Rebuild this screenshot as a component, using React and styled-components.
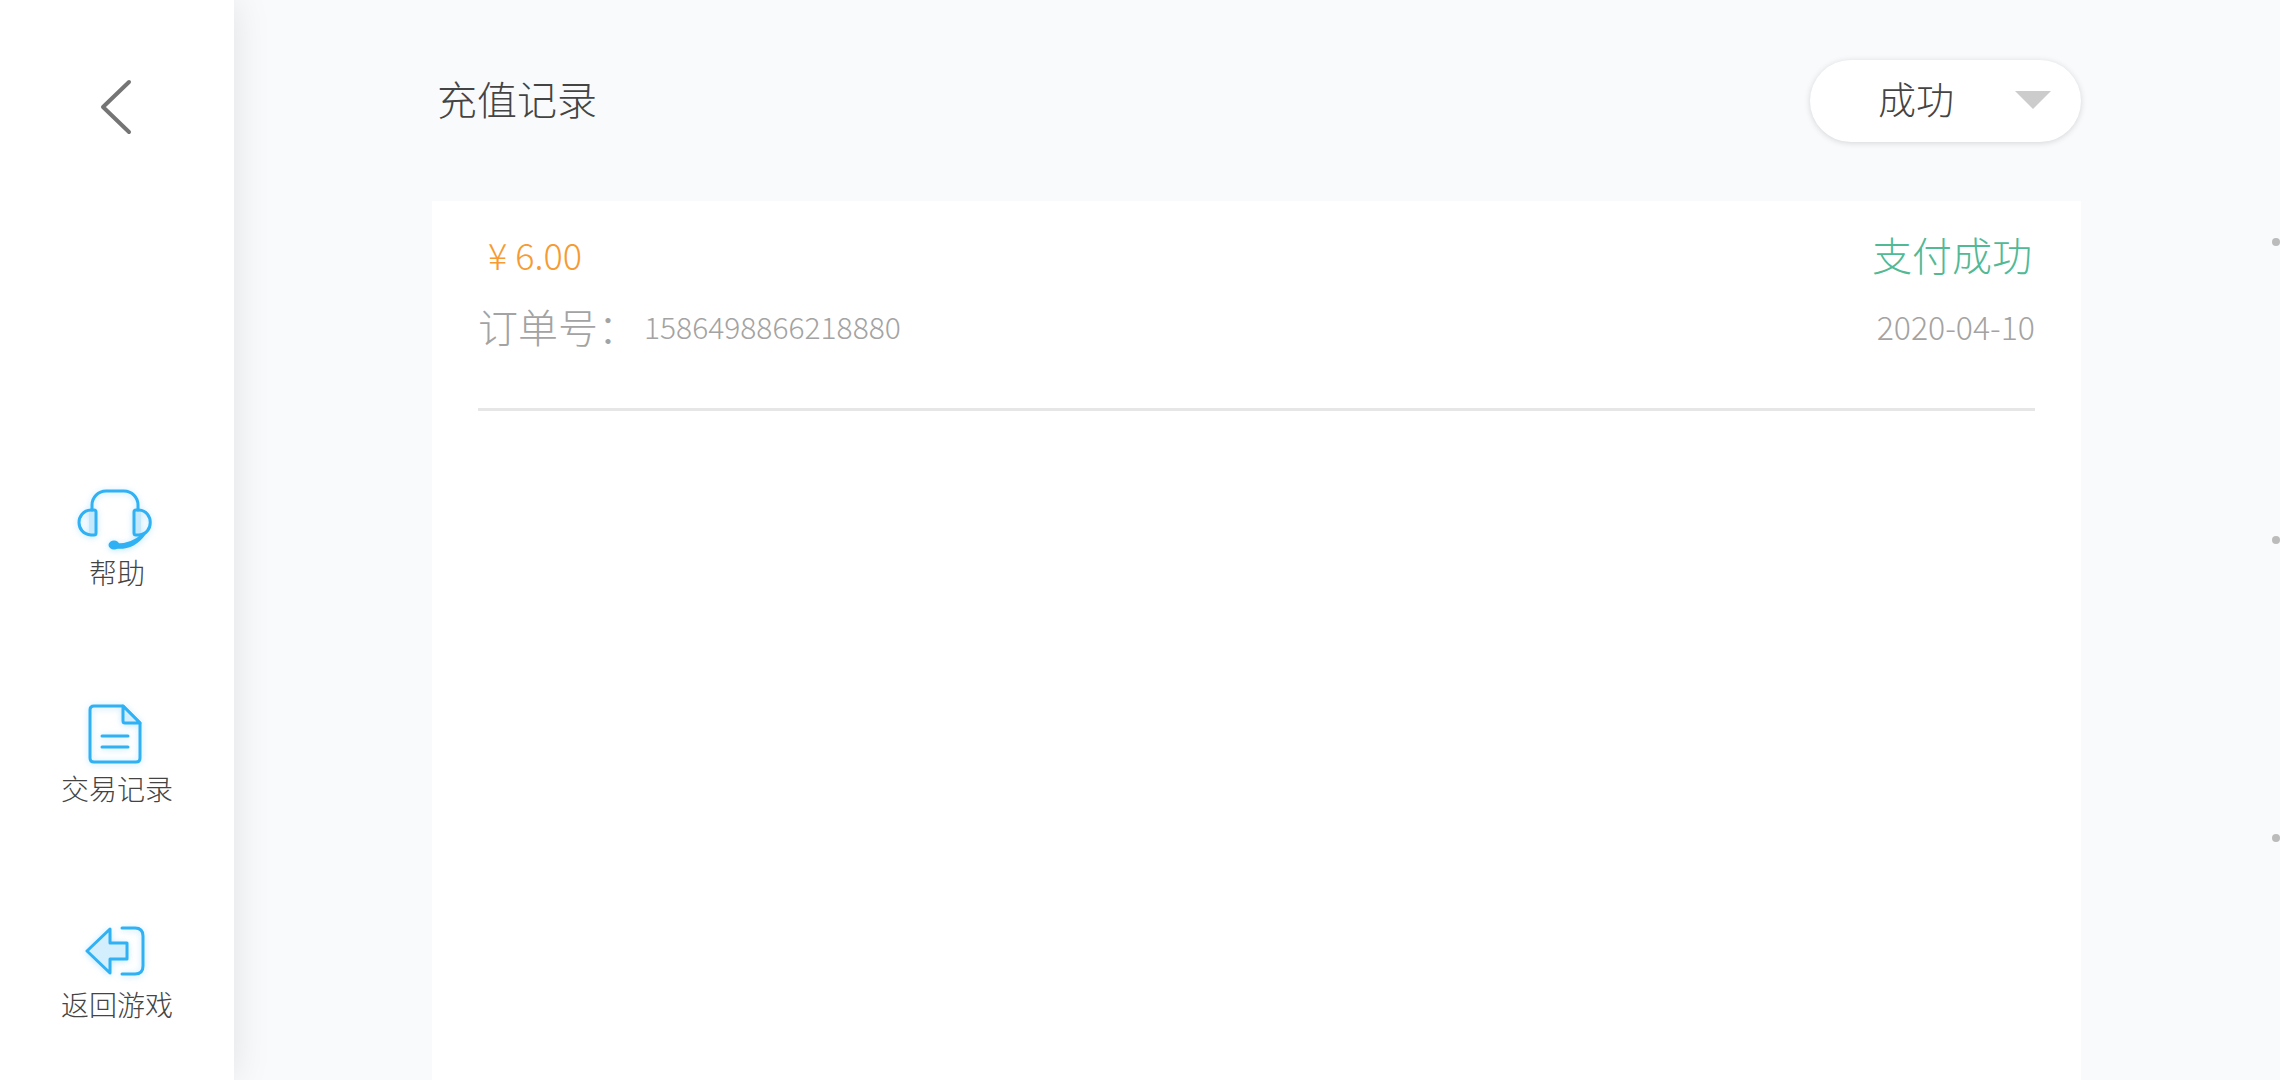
import { useState } from "react"
import styled, { createGlobalStyle } from "styled-components"

const records = [
    { id: "1586498866218880", amount: "6.00", status: "支付成功", date: "2020-04-10" },
]

const HelpIcon = () => (
    <Icon viewBox="0 0 80 64" aria-hidden="true">
        <path className="shade" d="M12 24H19V47H12ZM57 24H64V47H57Z" />
        <path d="M15 23V18A14 14 0 0 1 29 4H47A14 14 0 0 1 61 18V23" />
        <path d="M19 25V46Q19 48 17 48H14C-2 47 -2 24 14 23H17Q19 23 19 25Z" />
        <path d="M57 25V46Q57 48 59 48H62C77 47 77 24 62 23H59Q57 23 57 25Z" />
        <path className="dot" d="M67 47Q54 59 37 58L38 60Q56 62 67 47Z" />
        <ellipse className="dot" cx="37" cy="58" rx="4" ry="3" />
    </Icon>
)

const RecordIcon = () => (
    <Icon viewBox="0 0 80 64" aria-hidden="true">
        <path d="M46 3H17Q13 3 13 7V55Q13 59 17 59H59Q63 59 63 55V20Z" />
        <path className="tint" d="M46 3V18Q46 20 48 20H63Z" />
        <path d="M25 33H51M25 44H51" />
    </Icon>
)

const ExitIcon = () => (
    <Icon viewBox="0 0 80 64" aria-hidden="true">
        <path className="tint" d="M10 32L33 10V24H50V40H33V54Z" />
        <path d="M45 9H58Q66 9 66 17V47Q66 55 58 55H45" />
    </Icon>
)

export default function App() {

    const [status, setStatus] = useState("success")

    return (
        <Page>
            <GlobalStyle />
            <Sidebar>
                <BackBtn type="button" aria-label="返回">
                    <svg viewBox="0 0 52 64" aria-hidden="true">
                        <path d="M38 7L12 32L38 57" />
                    </svg>
                </BackBtn>
                <Nav>
                    <NavLink href="#help"><HelpIcon /><span>帮助</span></NavLink>
                    <NavLink href="#records"><RecordIcon /><span>交易记录</span></NavLink>
                    <NavLink href="#game"><ExitIcon /><span>返回游戏</span></NavLink>
                </Nav>
            </Sidebar>

            <Main>
                <Header>
                    <Title id="title">充值记录</Title>
                    <Filter>
                        <select aria-labelledby="title" value={status} onChange={ev => setStatus(ev.target.value)}>
                            <option value="success">成功</option>
                        </select>
                        <svg viewBox="0 0 36 18" aria-hidden="true">
                            <path d="M0 0H36L18 18Z" />
                        </svg>
                    </Filter>
                </Header>
                <Panel>
                    {records.map(record => (
                        <Record key={record.id}>
                            <Row>
                                <Amount>¥ {record.amount}</Amount>
                                <Status>{record.status}</Status>
                            </Row>
                            <Row>
                                <Order>订单号：<OrderId>{record.id}</OrderId></Order>
                                <RecordDate>{record.date}</RecordDate>
                            </Row>
                        </Record>
                    ))}
                </Panel>
            </Main>

            <EdgeDots aria-hidden="true"><i /><i /><i /></EdgeDots>
        </Page>
    )
}

const GlobalStyle = createGlobalStyle`
* {
    box-sizing: border-box;
}
body {
    margin: 0;
    background-color: #f8fafc;
    color: #444;
    font-family: "Noto Sans CJK SC", sans-serif;
    font-weight: 300;
}
`

const Page = styled.div`
position: relative;
display: flex;
min-height: 100vh;
overflow: hidden;
`

const Sidebar = styled.aside`
flex: 0 0 234px;
display: flex;
flex-direction: column;
align-items: center;
justify-content: space-between;
padding: 75px 0 60px;
background-color: #fff;
box-shadow: 0 0 36px rgba(0,0,0,0.1);
`

const BackBtn = styled.button`
width: 52px;
height: 64px;
padding: 0;
border: none;
background: none;
cursor: pointer;

svg {
    display: block;
    fill: none;
    stroke: #757575;
    stroke-width: 4;
    stroke-linecap: round;
    stroke-linejoin: round;
}
`

const Nav = styled.nav`
display: flex;
flex-direction: column;
gap: 115px;
`

const NavLink = styled.a`
display: flex;
flex-direction: column;
align-items: center;
gap: 5px;
color: #444;
font-size: 28px;
line-height: 32px;
text-decoration: none;
`

const Icon = styled.svg`
width: 80px;
height: 64px;
fill: none;
stroke: #2fb1f4;
stroke-width: 3;
stroke-linecap: round;
stroke-linejoin: round;
filter: drop-shadow(0 1px 3px rgba(47,177,244,0.3));

.tint {
    fill: #d3effd;
}
.shade {
    fill: #c5e9fc;
    stroke: none;
}
.dot {
    fill: #2fb1f4;
}
`

const Main = styled.main`
flex: 1;
min-width: 0;
display: flex;
flex-direction: column;
padding: 0 199px 0 198px;
`

const Header = styled.header`
display: flex;
align-items: center;
justify-content: space-between;
height: 201px;
`

const Title = styled.h1`
margin: 0;
padding: 0 0 6px 5px;
font-size: 40px;
font-weight: 300;
`

const Filter = styled.div`
position: relative;

select {
    display: block;
    width: 271px;
    height: 82px;
    padding: 0 64px 6px 68px;
    border: none;
    border-radius: 41px;
    appearance: none;
    background-color: #fff;
    box-shadow: 0 1px 6px rgba(0,0,0,0.15);
    color: #444;
    font: inherit;
    font-size: 38px;
    cursor: pointer;
}
svg {
    position: absolute;
    top: 31px;
    right: 30px;
    width: 36px;
    height: 18px;
    fill: #ccc;
    pointer-events: none;
}
`

const Panel = styled.section`
flex: 1;
padding: 17px 46px;
background-color: #fff;
`

const Record = styled.article`
padding-bottom: 46px;
border-bottom: 3px solid #e6e6e6;
`

const Row = styled.div`
display: flex;
align-items: center;
justify-content: space-between;
height: 72px;
font-size: 40px;
color: #a3a3a3;
`

const Amount = styled.span`
padding-left: 10px;
color: #f69a31;
font-size: 36px;
`

const Status = styled.span`
padding-right: 3px;
color: #52b995;
`

const Order = styled.span`
display: flex;
align-items: center;
gap: 6px;
`

const OrderId = styled.span`
font-size: 30px;
`

const RecordDate = styled.time`
font-size: 32px;
`

const EdgeDots = styled.div`
position: absolute;
top: 0;
right: 0;
bottom: 0;
display: flex;
flex-direction: column;
justify-content: center;
gap: 290px;

i {
    width: 8px;
    height: 8px;
    border-radius: 50%;
    background-color: #bbb;
}
`
